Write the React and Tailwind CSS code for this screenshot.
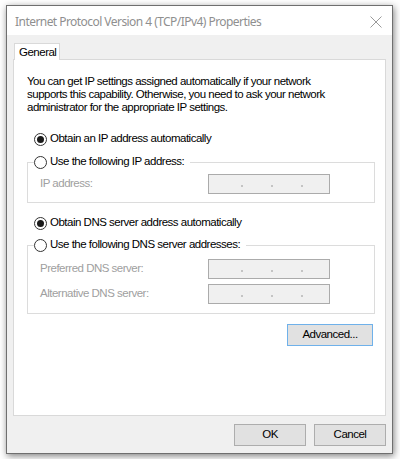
const SANS = 'font-["Liberation_Sans",Arial,sans-serif] text-[11.5px] tracking-[-0.5px]'

function Radio({ checked }) {
  return (
    <span className="w-[13px] h-[13px] rounded-full border border-[#333333] bg-white flex items-center justify-center shrink-0">
      {checked && <span className="w-[7px] h-[7px] rounded-full bg-[#1a1a1a]" />}
    </span>
  )
}

function RadioRow({ checked, label }) {
  return (
    <div className="h-[16px] flex items-center gap-[3px] text-black whitespace-nowrap">
      <Radio checked={checked} />
      <span>{label}</span>
    </div>
  )
}

function IpBox() {
  return (
    <div className="w-[122px] h-[20px] bg-[#f0f0f0] border border-[#ababab] flex items-end pb-[6px] pl-[32px] gap-[28px]">
      <span className="w-[2px] h-[2px] bg-[#c4c4c4]" />
      <span className="w-[2px] h-[2px] bg-[#c4c4c4]" />
      <span className="w-[2px] h-[2px] bg-[#c4c4c4]" />
    </div>
  )
}

function Field({ label }) {
  return (
    <div className="flex items-center">
      <span className="w-[180px] pl-[12px] text-[#a0a0a0] whitespace-nowrap">{label}</span>
      <IpBox />
    </div>
  )
}

function Group({ legend, children, contentClass }) {
  return (
    <fieldset className="ml-[13px] w-[348px] border border-[#dcdcdc] px-0">
      <legend className="ml-[6px] pr-[6px] bg-white">
        <RadioRow label={legend} />
      </legend>
      <div className={contentClass}>{children}</div>
    </fieldset>
  )
}

function Button({ children, primary, w }) {
  return (
    <button
      className={`${w} h-[22px] bg-[#e1e1e1] text-black border ${
        primary ? 'border-[#6fb1ea]' : 'border-[#adadad]'
      }`}
    >
      {children}
    </button>
  )
}

export default function App() {
  return (
    <div className={`w-[400px] h-[459px] bg-white overflow-hidden pt-[5px] pl-[6px] ${SANS}`}>
      <div className="w-[387px] h-[449px] border border-[#6f6f6f] bg-[#f0f0f0] flex flex-col shadow-[1px_2px_7px_rgba(0,0,0,0.5)]">
        {/* title bar */}
        <div className="h-[29px] bg-white flex items-center justify-between pl-[8px] pr-[10px] pt-[2px]">
          <span className='font-["Noto_Sans",sans-serif] text-[12px] text-[#8f8f8f] tracking-[-0.55px]'>
            Internet Protocol Version 4 (TCP/IPv4) Properties
          </span>
          <svg width="12" height="12" viewBox="0 0 12 12" className="text-[#9a9a9a]">
            <path d="M0.5 0.5 L11.5 11.5 M11.5 0.5 L0.5 11.5" stroke="currentColor" strokeWidth="1" fill="none" />
          </svg>
        </div>

        {/* body */}
        <div className="flex-1 pt-[8px] pl-[6px]">
          <div className="ml-[1px] w-[46px] h-[17px] -mb-[1px] relative z-10 bg-white border border-b-0 border-[#d9d9d9] text-black pl-[4px] leading-[16px]">
            General
          </div>

          <div className="w-[373px] h-[357px] bg-white border border-[#d9d9d9] text-black">
            <p className="pl-[13px] pt-[15px] leading-[13px]">
              You can get IP settings assigned automatically if your network
              <br />
              supports this capability. Otherwise, you need to ask your network
              <br />
              administrator for the appropriate IP settings.
            </p>

            <div className="mt-[17px] ml-[20px]">
              <RadioRow checked label="Obtain an IP address automatically" />
            </div>

            <div className="mt-[7px]">
              <Group legend="Use the following IP address:" contentClass="pt-[4px] pb-[8px]">
                <Field label="IP address:" />
              </Group>
            </div>

            <div className="mt-[12px] ml-[20px]">
              <RadioRow checked label="Obtain DNS server address automatically" />
            </div>

            <div className="mt-[6px]">
              <Group legend="Use the following DNS server addresses:" contentClass="pt-[6px] pb-[9px] flex flex-col gap-[5px]">
                <Field label="Preferred DNS server:" />
                <Field label="Alternative DNS server:" />
              </Group>
            </div>

            <div className="mt-[10px] ml-[13px] w-[348px] flex justify-end pr-[2px]">
              <Button primary w="w-[86px]">Advanced...</Button>
            </div>
          </div>

          <div className="mt-[8px] w-[373px] flex justify-end gap-[8px]">
            <Button w="w-[72px]">OK</Button>
            <Button w="w-[72px]">Cancel</Button>
          </div>
        </div>
      </div>
    </div>
  )
}
